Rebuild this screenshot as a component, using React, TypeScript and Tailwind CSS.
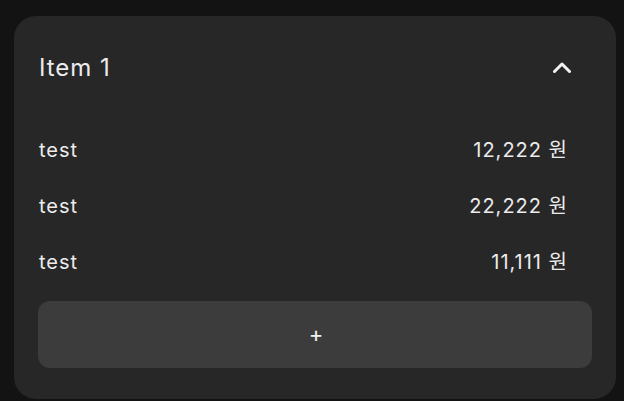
const rows = [
  ['test', '12,222 원'],
  ['test', '22,222 원'],
  ['test', '11,111 원'],
];

export default function App() {
  return (
    <div
      className="min-h-screen bg-[#131313] pl-[14px] pr-2 pt-4"
      style={{ fontFamily: 'Inter, "Noto Sans CJK KR", sans-serif' }}
    >
      <section className="rounded-[22px] bg-[#272727] px-6 pb-[31px] text-[#ececec]">
        <div className="flex items-center justify-between pt-9 pb-[38px] pl-px">
          <h2 className="text-[24px] leading-8 tracking-[0.04em]">Item 1</h2>
          <button className="mr-[20px] text-[#f2f2f2]">
            <svg width="20" height="12" viewBox="0 0 20 12" fill="none">
              <polyline
                points="2.5,9.5 10,2 17.5,9.5"
                stroke="currentColor"
                strokeWidth="3"
                strokeLinecap="round"
                strokeLinejoin="round"
              />
            </svg>
          </button>
        </div>
        <ul>
          {rows.map(([label, amount], i) => (
            <li
              key={i}
              className="flex h-14 items-center justify-between pl-px pr-6 text-[20px] tracking-[0.05em]"
            >
              <span>{label}</span>
              <span>{amount}</span>
            </li>
          ))}
        </ul>
        <button className="mt-[11px] flex h-[67px] w-full items-center justify-center rounded-xl bg-[#3c3c3c] pl-0.5 text-[22px] text-[#f0f0f0]">
          +
        </button>
      </section>
    </div>
  );
}
